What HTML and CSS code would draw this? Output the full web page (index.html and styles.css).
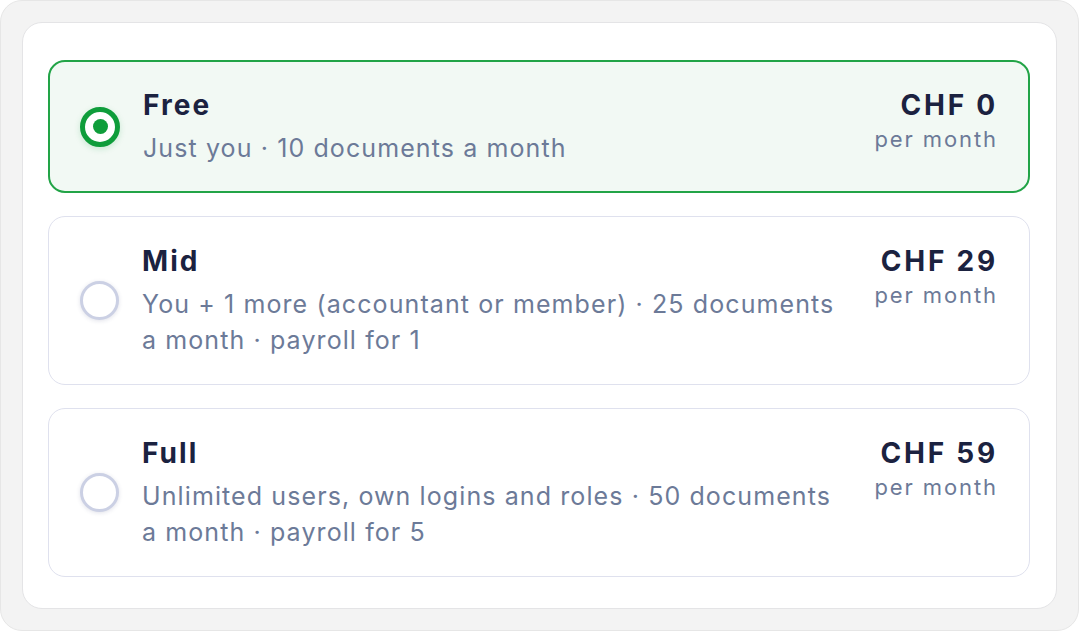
FILE: index.html
```html
<!DOCTYPE html>
<html>
<head>
<meta charset="utf-8">
<link rel="stylesheet" href="styles.css">
</head>
<body>
<div class="frame">
  <div class="panel">
    <label class="plan selected">
      <span class="radio on"><span class="dot"></span></span>
      <span class="info">
        <span class="name">Free</span>
        <span class="desc">Just you · 10 documents a month</span>
      </span>
      <span class="price">
        <span class="amount">CHF 0</span>
        <span class="period">per month</span>
      </span>
    </label>
    <label class="plan">
      <span class="radio"></span>
      <span class="info">
        <span class="name">Mid</span>
        <span class="desc">You + 1 more (accountant or member) · 25 documents a month · payroll for 1</span>
      </span>
      <span class="price">
        <span class="amount">CHF 29</span>
        <span class="period">per month</span>
      </span>
    </label>
    <label class="plan">
      <span class="radio"></span>
      <span class="info">
        <span class="name">Full</span>
        <span class="desc">Unlimited users, own logins and roles · 50 documents a month · payroll for 5</span>
      </span>
      <span class="price">
        <span class="amount">CHF 59</span>
        <span class="period">per month</span>
      </span>
    </label>
  </div>
</div>
</body>
</html>
```
FILE: styles.css
```css
* { box-sizing: border-box; }
html, body { margin: 0; padding: 0; background: #ffffff; }
body { font-family: Inter, "Noto Sans", sans-serif; }

.frame {
  width: 1079px;
  height: 631px;
  background: #f3f3f3;
  border: 1px solid #e6e6e6;
  border-radius: 22px;
  padding: 21px;
}

.panel {
  height: 100%;
  background: #ffffff;
  border: 1px solid #e4e4e6;
  border-radius: 20px;
  padding: 37px 26px 32px 25px;
  display: flex;
  flex-direction: column;
  gap: 23px;
}

.plan {
  display: flex;
  align-items: center;
  border: 1px solid #dfe1ee;
  border-radius: 17px;
  padding: 26px 33px 26px 31px;
  background: #ffffff;
}

.plan.selected {
  border: 2px solid #22a447;
  background: #f2f9f4;
  padding: 25px 32px 25px 30px;
}

.radio {
  flex: none;
  width: 39px;
  height: 39px;
  border-radius: 50%;
  border: 3px solid #cbd0e4;
  background: #ffffff;
  box-shadow: 0 1px 4px rgba(60, 70, 120, 0.16);
  display: flex;
  align-items: center;
  justify-content: center;
}

.radio.on {
  width: 40px;
  height: 40px;
  border: 5px solid #0f9d3b;
  box-shadow: 0 2px 6px rgba(15, 157, 59, 0.18);
}

.dot {
  width: 15px;
  height: 15px;
  border-radius: 50%;
  background: #0f9d3b;
}

.info {
  flex: 1;
  display: flex;
  flex-direction: column;
  gap: 7px;
  margin-left: 23px;
  margin-right: 24px;
}

.name {
  font-size: 28px;
  line-height: 36px;
  font-weight: 700;
  letter-spacing: 2.1px;
  color: #1b2240;
}

.desc {
  font-size: 25px;
  line-height: 36px;
  letter-spacing: 1.1px;
  color: #6c7a98;
}

.price {
  flex: none;
  align-self: flex-start;
  display: flex;
  flex-direction: column;
  align-items: flex-end;
  margin-right: -2px;
}

.amount {
  font-size: 28px;
  line-height: 36px;
  font-weight: 700;
  letter-spacing: 2.8px;
  color: #1b2240;
}

.period {
  font-size: 22px;
  line-height: 32px;
  letter-spacing: 1.9px;
  color: #6c7a98;
}
```
